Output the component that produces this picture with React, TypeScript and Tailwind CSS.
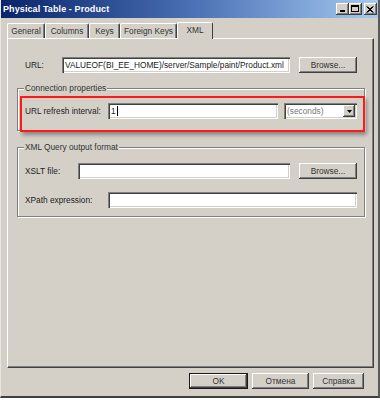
import React from "react";

const sunken =
  "bg-white shadow-[inset_1px_1px_0_#808080,inset_2px_2px_0_#404040,inset_-1px_-1px_0_#ffffff,inset_-2px_-2px_0_#d4d0c8]";
const raised =
  "bg-[#d4d0c8] shadow-[inset_-1px_-1px_0_#404040,inset_1px_1px_0_#ffffff,inset_-2px_-2px_0_#808080]";

function Btn({ label, w, isDefault }: { label: string; w: string; isDefault?: boolean }) {
  return (
    <div
      className={`${w} h-[16px] flex items-center justify-center ${raised} ${
        isDefault ? "outline outline-1 outline-[#1a1a1a] -outline-offset-1 shadow-[inset_-2px_-2px_0_#404040,inset_2px_2px_0_#ffffff,inset_-3px_-3px_0_#808080]" : ""
      }`}
    >
      <span className="text-[#333]">{label}</span>
    </div>
  );
}

function Tab({ label, w, active }: { label: string; w: string; active?: boolean }) {
  if (active) {
    return (
      <div
        className={`${w} h-[17px] -mb-px relative z-10 bg-[#d4d0c8] border-t border-l border-white border-r border-r-[#404040] rounded-t-[2px] flex items-start justify-center pt-[3px]`}
      >
        <span className="text-[#333]">{label}</span>
      </div>
    );
  }
  return (
    <div
      className={`${w} h-[15px] bg-[#d4d0c8] border-t border-l border-white border-r border-r-[#404040] rounded-t-[2px] shadow-[inset_-1px_0_0_#808080] flex items-center justify-center`}
    >
      <span className="text-[#333]">{label}</span>
    </div>
  );
}

function Group({ title, h, children }: { title: string; h: string; children: React.ReactNode }) {
  return (
    <div
      className={`ml-[9px] w-[348px] ${h} border border-[#808080] shadow-[1px_1px_0_#ffffff,inset_1px_1px_0_#ffffff] flex flex-col`}
    >
      <span className="-mt-[6px] ml-[6px] self-start bg-[#d4d0c8] px-[1px] h-[10px] leading-[10px] text-[#333]">
        {title}
      </span>
      {children}
    </div>
  );
}

export default function App() {
  return (
    <div className="relative w-[380px] h-[400px] bg-white overflow-hidden [font-family:'Liberation_Sans',Arial,sans-serif] text-[8.3px] leading-none text-[#222]">
      <div className="h-[398px] bg-[#d4d0c8] border-l border-l-[#e8e6e0] border-r-2 border-r-[#5a5a5a] border-b-2 border-b-[#404040] flex flex-col">
        {/* Title bar */}
        <div className="h-[18px] flex items-center bg-linear-to-r from-[#0a246a] via-[#4a6fb3] to-[#a6caf0] pl-[2px] pr-[1px]">
          <span className="flex-1 text-white font-bold text-[9px] tracking-[0.1px]">Physical Table - Product</span>
          <div className="flex items-center">
            <div className={`w-[13px] h-[12px] ${raised} flex items-end justify-center pb-[3px]`}>
              <div className="w-[5px] h-[2px] bg-black -ml-[1px]" />
            </div>
            <div className={`w-[13px] h-[12px] ${raised} flex items-center justify-center`}>
              <div className="w-[8px] h-[7px] border border-black border-t-2 -mt-[1px] -ml-[1px]" />
            </div>
            <div className={`ml-[2px] w-[13px] h-[12px] ${raised} flex items-center justify-center`}>
              <svg width="8" height="7" viewBox="0 0 8 7" className="-ml-[1px]">
                <path d="M0.5 0.5 L6.5 6.5 M1.5 0.5 L7.5 6.5 M6.5 0.5 L0.5 6.5 M7.5 0.5 L1.5 6.5" stroke="#000" strokeWidth="1" />
              </svg>
            </div>
          </div>
        </div>

        {/* Tabs */}
        <div className="mt-[4px] h-[16px] pl-[6px] flex items-end">
          <Tab label="General" w="w-[38px]" />
          <Tab label="Columns" w="w-[44px]" />
          <Tab label="Keys" w="w-[31px]" />
          <Tab label="Foreign Keys" w="w-[57px]" />
          <Tab label="XML" w="w-[36px]" active />
        </div>

        {/* Panel */}
        <div className="ml-[6px] mr-[4px] h-[330px] border-t border-l border-white border-r border-b border-r-[#404040] border-b-[#404040] shadow-[inset_-1px_-1px_0_#808080] flex flex-col">
          {/* URL row */}
          <div className="mt-[18px] ml-[17px] flex items-center h-[16px]">
            <span className="w-[37px]">URL:</span>
            <div className={`w-[228px] h-[16px] ${sunken} flex items-center pl-[3px] overflow-hidden whitespace-nowrap`}>
              <span className="text-[#1a1a1a]">VALUEOF(BI_EE_HOME)/server/Sample/paint/Product.xml</span>
            </div>
            <div className="ml-[9px]">
              <Btn label="Browse..." w="w-[58px]" />
            </div>
          </div>

          {/* Connection properties */}
          <div className="mt-[15px]">
            <Group title="Connection properties" h="h-[43px]">
              <div className="mt-[10px] ml-[7px] flex items-center h-[16px]">
                <span className="w-[83px]">URL refresh interval:</span>
                <div className={`w-[170px] h-[16px] ${sunken} flex items-center pl-[3px]`}>
                  <span className="text-[#1a1a1a]">1</span>
                  <span className="w-px h-[10px] bg-black ml-[1px]" />
                </div>
                <div className={`ml-[6px] w-[73px] h-[16px] ${sunken} flex items-center pl-[3px] pr-[2px]`}>
                  <span className="flex-1 text-[#777]">(seconds)</span>
                  <div className={`w-[12px] h-[12px] ${raised} flex items-center justify-center`}>
                    <svg width="5" height="3" viewBox="0 0 5 3">
                      <path d="M0 0 H5 L2.5 3 Z" fill="#000" />
                    </svg>
                  </div>
                </div>
              </div>
            </Group>
          </div>

          {/* XML Query output format */}
          <div className="mt-[16px]">
            <Group title="XML Query output format" h="h-[70px]">
              <div className="mt-[11px] ml-[7px] flex items-center h-[16px]">
                <span className="w-[53px]">XSLT file:</span>
                <div className={`w-[212px] h-[16px] ${sunken}`} />
                <div className="ml-[9px]">
                  <Btn label="Browse..." w="w-[58px]" />
                </div>
              </div>
              <div className="mt-[13px] ml-[7px] flex items-center h-[16px]">
                <span className="w-[83px]">XPath expression:</span>
                <div className={`w-[249px] h-[16px] ${sunken}`} />
              </div>
            </Group>
          </div>
        </div>

        {/* Bottom buttons */}
        <div className="mt-[5px] flex justify-end gap-[4px] pr-[14px]">
          <Btn label="OK" w="w-[59px]" isDefault />
          <Btn label="Отмена" w="w-[57px]" />
          <Btn label="Справка" w="w-[51px]" />
        </div>
      </div>

      {/* Red annotation rectangle */}
      <div className="absolute left-[20px] top-[96px] w-[345px] h-[36px] border-2 border-[#ff1a1a] shadow-[2px_3px_4px_rgba(0,0,0,0.35)]" />
    </div>
  );
}
